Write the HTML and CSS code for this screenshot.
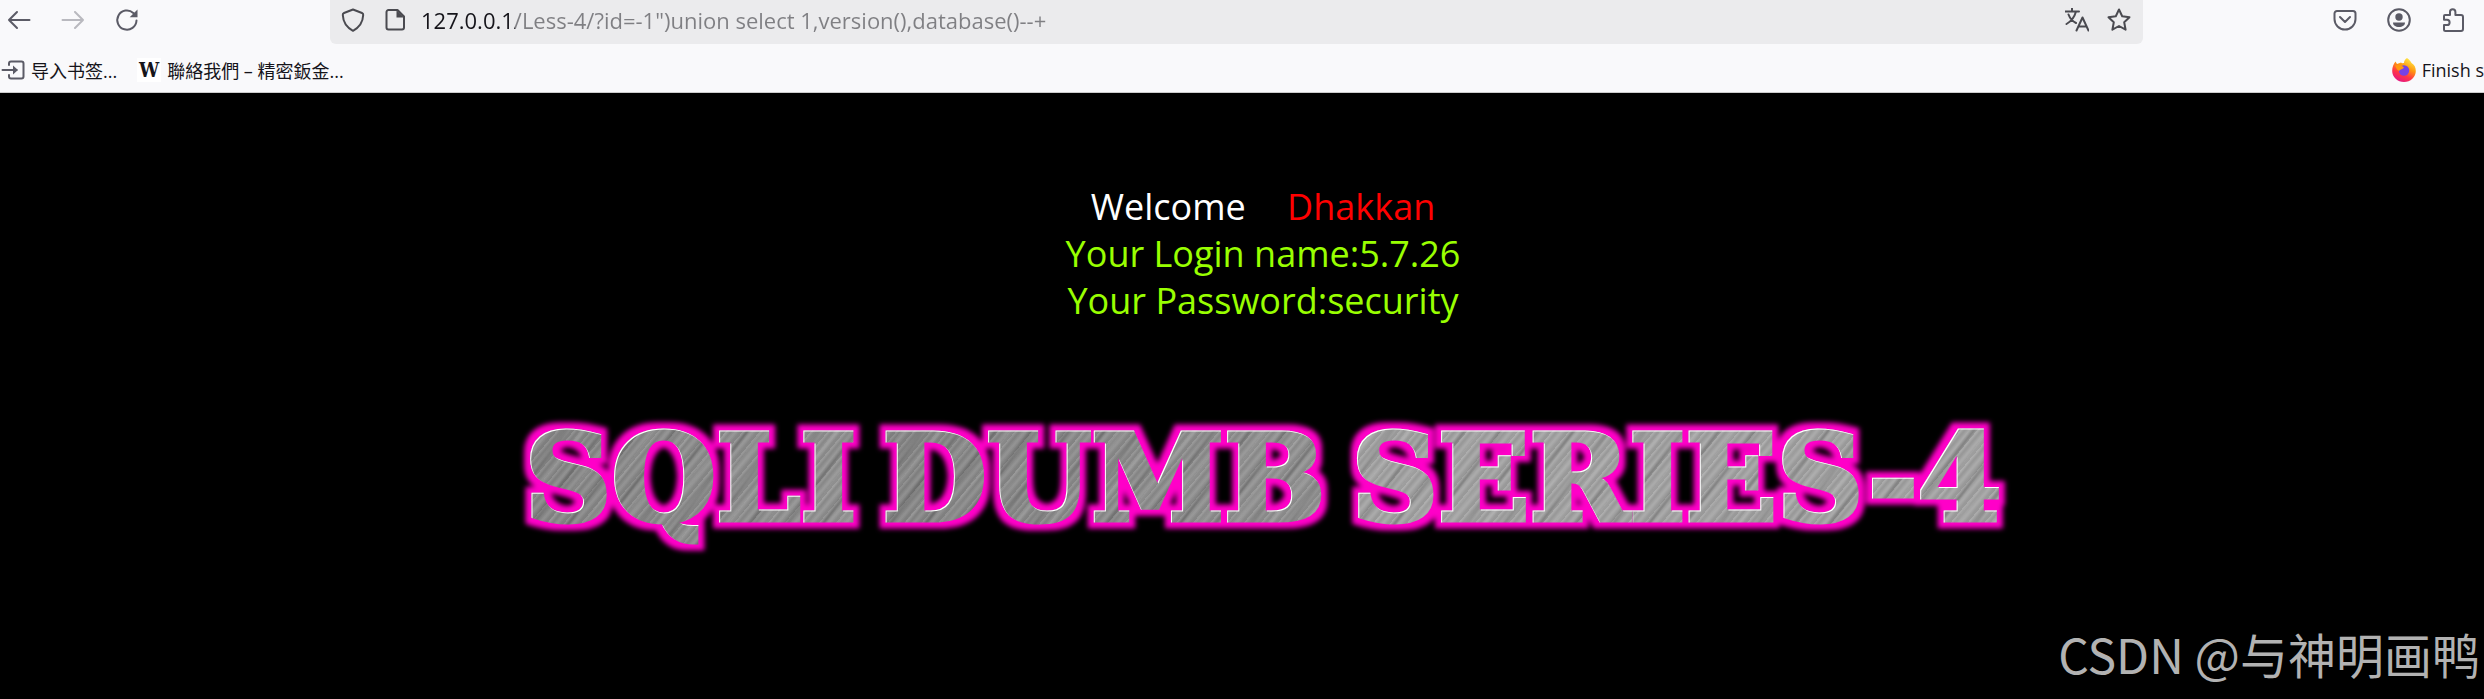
FILE: index.html
```html
<!DOCTYPE html>
<html lang="zh-CN">
<head>
    <meta charset="UTF-8">
    <meta name="viewport" content="width=device-width, initial-scale=1.0">
    <title>Less-4</title>
    <link rel="stylesheet" href="styles.css">
</head>
<body>
    <header class="browser">
        <div class="toolbar">
            <nav class="nav-buttons">
                <button type="button" aria-label="Back">
                    <svg viewBox="0 0 24 24"><path d="M22.500 12H2M10 4l-8 8 8 8"/></svg>
                </button>
                <button type="button" aria-label="Forward" disabled>
                    <svg viewBox="0 0 24 24"><path d="M1.500 12H22M14 4l8 8-8 8"/></svg>
                </button>
                <button type="button" aria-label="Reload">
                    <svg viewBox="0 0 24 24"><path d="M21.500 12.500a9.600 9.600 0 1 1-3.200-7.600l2 1.900"/><path class="solid" d="M22.500 1.500v7.800h-7.800z"/></svg>
                </button>
            </nav>
            <div class="urlbar">
                <svg viewBox="0 0 24 24"><path d="M12 1.500L21 5c1 .4 1.300 1 1.200 2-.3 7-3.200 12-10.200 15.800C5 19 2.100 14 1.800 7c-.1-1 .2-1.600 1.200-2z"/></svg>
                <svg viewBox="0 0 24 24"><path d="M5.500 2h9L21 8.500V19.500a2 2 0 0 1-2 2H5.500a2 2 0 0 1-2-2V4a2 2 0 0 1 2-2z"/><path class="solid" d="M13.500 2v7.500H21z"/></svg>
                <input type="text" class="url" aria-label="Address" value="127.0.0.1/Less-4/?id=-1&quot;)union select 1,version(),database()--+">
                <button type="button" aria-label="Translate">
                    <svg viewBox="0 0 24 24"><path d="M0 3.500h14M7 .5v3M11 3.500C9.500 9 6 13.500 1.500 16M3.500 6.500c1.500 4 4.500 7 7.500 8.500M11.500 22.500L17.500 9.500l6 13M13.500 18.500h8"/></svg>
                </button>
                <button type="button" aria-label="Bookmark this page">
                    <svg viewBox="0 0 24 24"><path d="M12 1.500l3.200 6.700 7.300 1-5.300 5 1.400 7.500L12 18l-6.600 3.700 1.400-7.500-5.300-5 7.300-1z"/></svg>
                </button>
            </div>
            <div class="actions">
                <button type="button" aria-label="Pocket">
                    <svg viewBox="0 0 24 24"><path d="M4 3h16a2.500 2.500 0 0 1 2.500 2.500V11a10.500 10.500 0 0 1-21 0V5.500A2.500 2.500 0 0 1 4 3zM7 9l5 5 5-5"/></svg>
                </button>
                <button type="button" aria-label="Account">
                    <svg viewBox="0 0 24 24"><circle cx="12" cy="12" r="10.800"/><circle class="solid" cx="12" cy="9" r="3.700"/><path class="solid" d="M6 14.500h12c0 2.800-2.500 4.500-6 4.500s-6-1.700-6-4.500z"/></svg>
                </button>
                <button type="button" aria-label="Extensions">
                    <svg viewBox="0 0 24 24"><path d="M4 7h5V4a2.700 2.700 0 0 1 5.400 0v3H20a2 2 0 0 1 2 2v12a2 2 0 0 1-2 2H4.500A1.500 1.500 0 0 1 3 21.500V17h3a2.500 2.500 0 0 0 0-5.200H3V8a1 1 0 0 1 1-1z"/></svg>
                </button>
            </div>
        </div>
        <div class="bookmarks">
            <a href="#">
                <svg viewBox="0 0 24 24"><path d="M8 7V5.500a2 2 0 0 1 2-2h10.500a2 2 0 0 1 2 2v13a2 2 0 0 1-2 2H10a2 2 0 0 1-2-2V17M1.500 12h14"/><path class="solid" d="M12 7.500l5 4.500-5 4.500z"/></svg>
                导入书签...
            </a>
            <a href="#">
                <span class="favicon">W</span>
                聯絡我們 – 精密鈑金...
            </a>
            <a href="#" class="finish">
                <svg class="firefox" viewBox="0 0 24 24">
                    <defs>
                        <linearGradient id="fox" x1="0.800" y1="0" x2="0.300" y2="1">
                            <stop offset="0" stop-color="#fff44f"/>
                            <stop offset="0.400" stop-color="#ff980e"/>
                            <stop offset="0.700" stop-color="#ff3647"/>
                            <stop offset="1" stop-color="#e31587"/>
                        </linearGradient>
                    </defs>
                    <path fill="url(#fox)" d="M15 0c3 2 4 4 4.500 5 3 1.500 4.300 4.500 4.300 8a11.800 11 0 0 1-23.600 0C.2 9 1.500 6 3.500 3.500L5 6l4-1.500c1 1 2 .5 3 .5 0-2 1-4 3-5z"/>
                    <circle cx="12" cy="12.500" r="5.200" fill="#7542e5"/>
                    <path fill="#ff980e" d="M3 7.500l5-1 4 3c-1 1.500-3 1.500-4 2.500-1 2-3 0-5-4.500z"/>
                </svg>
                Finish s
            </a>
        </div>
    </header>

    <main>
        <div class="welcome">
            <p class="greeting">Welcome <span>Dhakkan</span></p>
            <p>Your Login name:5.7.26</p>
            <p>Your Password:security</p>
        </div>
        <h1 class="banner"><span>SQLI</span> <span>DUMB</span> <span>SERIES-4</span></h1>
        <p class="watermark">CSDN @与神明画鸭</p>
    </main>

    <!-- pink glow and light edge for the banner -->
    <svg class="filters" width="0" height="0" aria-hidden="true">
        <filter id="neon" x="-5%" y="-30%" width="110%" height="160%" color-interpolation-filters="sRGB">
            <feMorphology in="SourceAlpha" operator="dilate" radius="6" result="fat"/>
            <feGaussianBlur in="fat" stdDeviation="2.500" result="soft"/>
            <feFlood flood-color="#ff00c8"/>
            <feComposite in2="soft" operator="in" result="glow"/>
            <feOffset in="SourceAlpha" dx="1" dy="1" result="moved"/>
            <feFlood flood-color="#fff"/>
            <feComposite in2="SourceAlpha" operator="in"/>
            <feComposite in2="moved" operator="out" result="edge"/>
            <feMerge>
                <feMergeNode in="glow"/>
                <feMergeNode in="SourceGraphic"/>
                <feMergeNode in="edge"/>
            </feMerge>
        </filter>
    </svg>
</body>
</html>
```
FILE: styles.css
```css
* {
    box-sizing: border-box;
}
body {
    margin: 0;
    min-height: 100vh;
    display: flex;
    flex-direction: column;
    overflow-x: hidden;
    background: #000;
    font-family: "Open Sans", "Noto Sans CJK SC", sans-serif;
}
p, h1 {
    margin: 0;
}
button {
    display: flex;
    padding: 0;
    border: 0;
    background: none;
    color: inherit;
}
button:disabled {
    opacity: 0.4;
}
svg {
    width: 24px;
    height: 24px;
    flex: none;
    fill: none;
    stroke: currentColor;
    stroke-width: 2;
    stroke-linejoin: round;
    stroke-linecap: round;
}
.solid {
    fill: currentColor;
    stroke: none;
}
.browser {
    background: #f9f9fb;
    border-bottom: 1px solid #ccc;
    color: #5b5b66;
}
.toolbar {
    display: flex;
    height: 44px;
}
.nav-buttons {
    display: flex;
    align-items: center;
    gap: 30px;
    width: 330px;
    padding: 0 0 4px 7px;
}
.urlbar {
    flex: 1;
    display: flex;
    align-items: center;
    gap: 18px;
    padding: 0 12px 4px 11px;
    background: #ebebed;
    border-radius: 0 0 6px 6px;
    color: #4a4a50;
}
.url {
    flex: 1;
    height: 32px;
    margin-left: -4px;
    padding: 0;
    border: 0;
    outline: 0;
    font: 22px "Open Sans", sans-serif;
    background: linear-gradient(to right, #15141a 94px, #7f7f83 94px);
    -webkit-background-clip: text;
    background-clip: text;
    color: transparent;
}
.actions {
    display: flex;
    align-items: center;
    gap: 30px;
    width: 341px;
    padding: 0 19px 4px 0;
    justify-content: flex-end;
}
.bookmarks {
    display: flex;
    align-items: center;
    gap: 20px;
    height: 48px;
    padding: 4px 0 0 1px;
    font-size: 18px;
    white-space: nowrap;
}
.bookmarks a {
    display: flex;
    align-items: center;
    gap: 6px;
    color: #15141a;
    text-decoration: none;
}
.bookmarks svg {
    color: #5b5b66;
}
.favicon {
    width: 24px;
    height: 24px;
    background: #fff;
    font: bold 20px/24px "DejaVu Serif Condensed", "DejaVu Serif", serif;
    text-align: center;
}
.bookmarks .finish {
    margin-left: auto;
}
.firefox {
    stroke: none;
}
main {
    flex: 1;
    display: flex;
    flex-direction: column;
    align-items: center;
    padding: 90px 0 0 42px;
}
.welcome {
    font-size: 36px;
    line-height: 47px;
    text-align: center;
    color: #9f0;
}
.greeting {
    color: #fff;
}
.greeting span {
    margin-left: 32px;
    color: #f00;
}
.banner {
    display: flex;
    gap: 26px;
    margin-top: 84px;
    font: bold 120px/140px "DejaVu Serif", serif;
    white-space: nowrap;
    filter: url(#neon);
}
.banner span {
    background:
        repeating-linear-gradient(130deg, #fff1 0 1px, #0001 3px 4px, #fff1 7px 8px, #0001 11px 13px),
        repeating-linear-gradient(127deg, #fff1 0 3px, #0000 5px 14px, #0002 17px 18px, #0000 20px 29px),
        linear-gradient(to right, #888, #949494);
    -webkit-background-clip: text;
    background-clip: text;
    color: transparent;
    -webkit-text-stroke: 5px transparent;
}
.banner span:last-child {
    background-color: #a4a4a4;
    background-image:
        repeating-linear-gradient(130deg, #fff1 0 1px, #0001 3px 4px, #fff1 7px 8px, #0001 11px 13px),
        repeating-linear-gradient(127deg, #fff1 0 3px, #0000 5px 14px, #0002 17px 18px, #0000 20px 29px);
}
.watermark {
    align-self: flex-end;
    margin-top: auto;
    padding: 0 4px 12px 0;
    font: 48px/68px "Noto Sans CJK SC", sans-serif;
    color: #b2b2b2;
}
.filters {
    position: absolute;
}
```
